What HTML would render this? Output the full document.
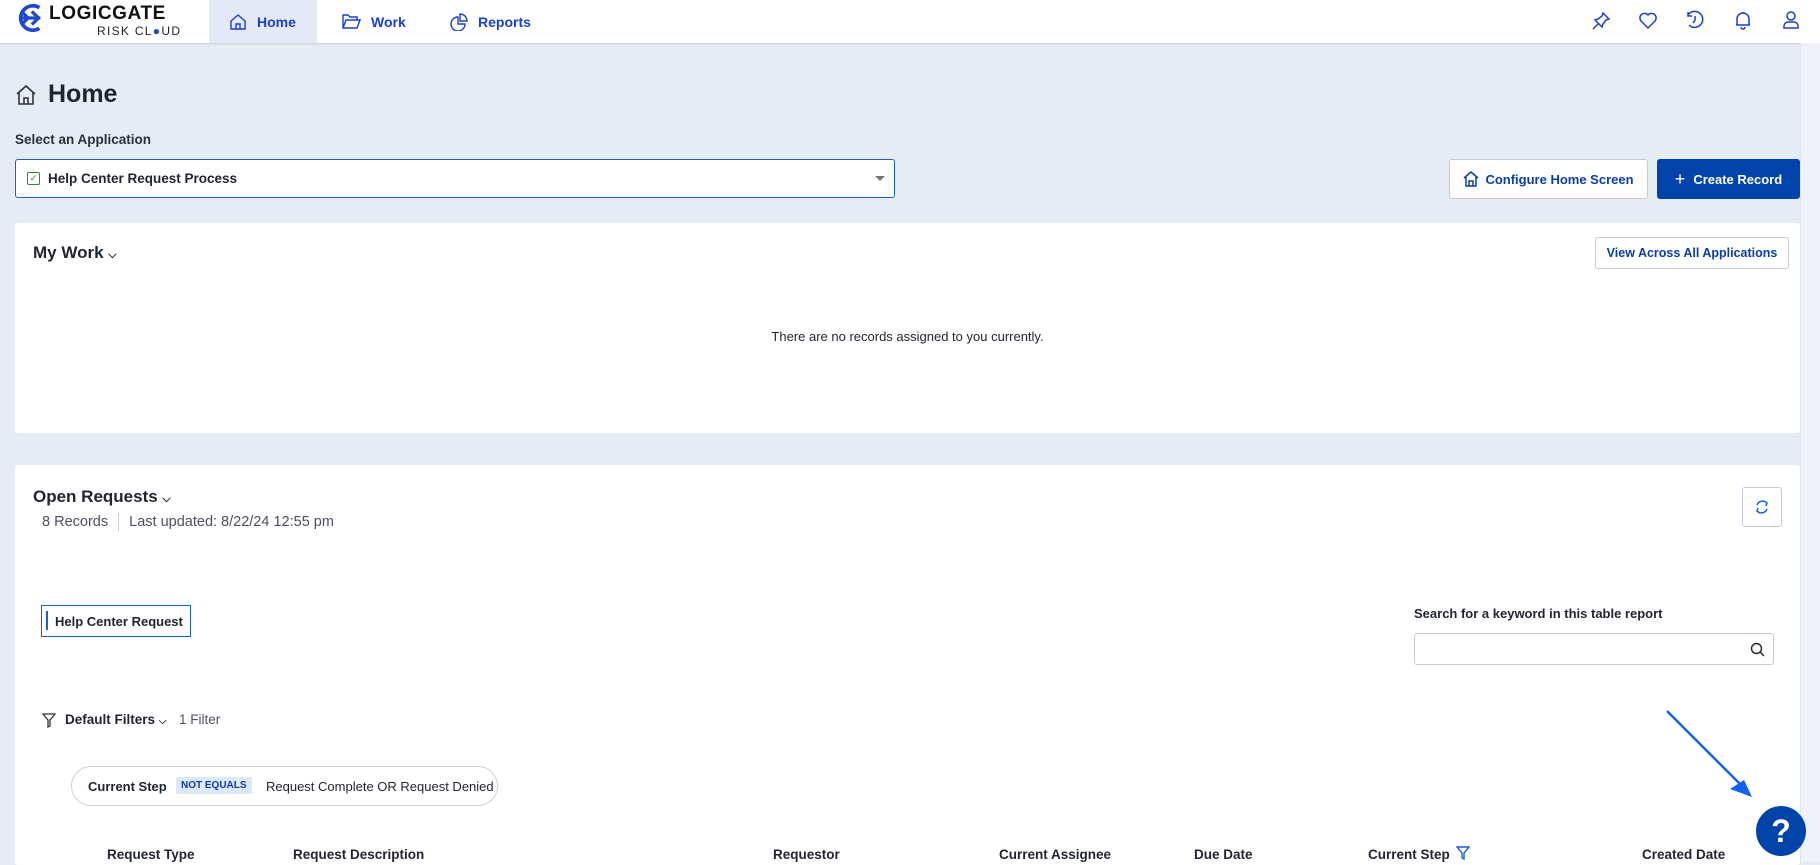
<!DOCTYPE html>
<html><head><meta charset="utf-8"><style>
*{box-sizing:border-box;margin:0;padding:0;white-space:nowrap}
body{width:1820px;height:862px;overflow:hidden;background:#e6ecf4;font-family:"Liberation Sans",sans-serif;color:#1e2430;position:relative}
.nav{position:absolute;left:0;top:0;width:1820px;height:43px;background:#fff;box-shadow:0 1px 2px rgba(0,0,0,.12)}
.abs{position:absolute}
.navitem{position:absolute;top:0;height:43px;display:flex;align-items:center;color:#1a3fcf;font-size:14px;font-weight:bold}
.navitem svg{margin-right:10px}
.btn{position:absolute;border:1px solid #c5cad6;border-radius:3px;background:#fff;color:#0c3da6;font-weight:bold;font-size:13px;display:flex;align-items:center;justify-content:center}
.card{position:absolute;background:#fff;border-radius:3px}
.th{position:absolute;top:847px;font-size:13.5px;font-weight:bold;color:#1e2430}
</style></head><body>
<div class="nav">
 <svg class="abs" style="left:14px;top:3px" width="32" height="30" viewBox="0 0 34 32"><path d="M27 5A13 13 0 1 0 27 27" fill="none" stroke="#1f47c9" stroke-width="4"/><path d="M6 16h22M19 9l7 7-7 7M10 11l5 5-5 5" fill="none" stroke="#1f47c9" stroke-width="3.5"/></svg>
 <div class="abs" style="left:49px;top:3px;font-size:19px;font-weight:bold;letter-spacing:0.6px;color:#111">LOGICGATE</div>
 <div class="abs" style="left:97px;top:24px;font-size:12px;letter-spacing:1.3px;color:#222">RISK CL<span style="color:#1f47c9">●</span>UD</div>
 <div class="abs" style="left:209px;top:0;width:108px;height:43px;background:#e4e9f8"></div>
 <div class="navitem" style="left:229px"><svg width="18" height="18" viewBox="0 0 18 18" fill="none" stroke="#1a3fcf" stroke-width="1.4"><path d="M2 8L9 2l7 6v8H2zM7 16v-5h4v5"/></svg>Home</div>
 <div class="navitem" style="left:342px"><svg width="19" height="17" viewBox="0 0 19 17" fill="none" stroke="#1a3fcf" stroke-width="1.4"><path d="M1 15V2h5l2 2h7v3M1 15l3-8h14l-3 8z"/></svg>Work</div>
 <div class="navitem" style="left:450px"><svg width="18" height="18" viewBox="0 0 18 18" fill="none" stroke="#1a3fcf" stroke-width="1.4"><path d="M8 4a7 7 0 1 0 7 7H8z"/><path d="M10 1v7h7a7 7 0 0 0-7-7z"/></svg>Reports</div>
 <svg class="abs" style="left:1591px;top:11px" width="20" height="20" viewBox="0 0 20 20" fill="none" stroke="#1a3fcf" stroke-width="1.5"><path d="M12 2l6 6-3 1-3 4-1 3-7-7 3-1 4-3zM7 13l-5 5"/></svg>
 <svg class="abs" style="left:1638px;top:11px" width="20" height="20" viewBox="0 0 20 20" fill="none" stroke="#1a3fcf" stroke-width="1.5"><path d="M10 17L3 10a4 4 0 0 1 7-6 4 4 0 0 1 7 6z"/></svg>
 <svg class="abs" style="left:1685px;top:10px" width="20" height="20" viewBox="0 0 20 20" fill="none" stroke="#1a3fcf" stroke-width="1.5"><path d="M3 5a8 8 0 1 1 1 10M3 2v4h4M10 6v4l-2 3"/></svg>
 <svg class="abs" style="left:1733px;top:10px" width="20" height="20" viewBox="0 0 20 20" fill="none" stroke="#1a3fcf" stroke-width="1.5"><path d="M4 15V9a6 6 0 0 1 12 0v6H3h14M8 17a2 2 0 0 0 4 0M10 3V2"/></svg>
 <svg class="abs" style="left:1781px;top:10px" width="20" height="20" viewBox="0 0 20 20" fill="none" stroke="#1a3fcf" stroke-width="1.5"><circle cx="10" cy="6" r="4"/><path d="M3 18v-2a4 4 0 0 1 4-4h6a4 4 0 0 1 4 4v2z"/></svg>
</div>
<div class="abs" style="right:0;top:43px;width:20px;height:819px;background:#eef2f8;border-left:1px solid #dde3ec"></div>

<svg class="abs" style="left:15px;top:84px" width="22" height="22" viewBox="0 0 22 22" fill="none" stroke="#333" stroke-width="1.6"><path d="M2 10L11 2l9 8M4 8v12h14V8M9 20v-6h4v6"/></svg>
<div class="abs" style="left:48px;top:80px;font-size:25px;font-weight:bold">Home</div>
<div class="abs" style="left:15px;top:132px;font-size:13.5px;font-weight:bold;color:#2a2f3a">Select an Application</div>
<div class="abs" style="left:15px;top:159px;width:880px;height:39px;background:#fff;border:1px solid #1b5fd0;border-radius:3px">
 <div class="abs" style="left:11px;top:12px;width:13px;height:13px;border:1.5px solid #2c8a3c;border-radius:2px;font-size:9px;color:#2c8a3c;text-align:center;line-height:10px">✓</div>
 <div class="abs" style="left:32px;top:11px;font-size:13.5px;font-weight:bold">Help Center Request Process</div>
 <div class="abs" style="right:9px;top:16px;border-left:5px solid transparent;border-right:5px solid transparent;border-top:5px solid #777"></div>
</div>
<div class="btn" style="left:1449px;top:159px;width:199px;height:40px;font-size:13px"><svg width="16" height="16" viewBox="0 0 16 16" fill="none" stroke="#0c3da6" stroke-width="1.5" style="margin-right:6px"><path d="M1 7l7-6 7 6M3 5v10h10V5M6 15v-5h4v5"/></svg>Configure Home Screen</div>
<div class="btn" style="left:1657px;top:159px;width:143px;height:40px;background:#0044aa;border-color:#0044aa;color:#fff"><span style="font-size:18px;font-weight:normal;margin-right:8px">+</span>Create Record</div>

<div class="card" style="left:15px;top:223px;width:1785px;height:210px">
 <div class="abs" style="left:18px;top:20px;font-size:17px;font-weight:bold">My Work <span style="font-size:11px">⌵</span></div>
 <div class="btn" style="left:1580px;top:14px;width:194px;height:32px;font-size:12.5px">View Across All Applications</div>
 <div class="abs" style="left:0;width:100%;top:106px;text-align:center;font-size:13px">There are no records assigned to you currently.</div>
</div>

<div class="card" style="left:15px;top:465px;width:1785px;height:400px">
 <div class="abs" style="left:18px;top:22px;font-size:17px;font-weight:bold">Open Requests <span style="font-size:11px">⌵</span></div>
 <div class="abs" style="left:27px;top:48px;font-size:14.5px;color:#4a5160">8 Records <span style="display:inline-block;width:1px;height:18px;background:#ccc;vertical-align:middle;margin:0 6px"></span> Last updated: 8/22/24 12:55 pm</div>
 <div class="btn" style="left:1727px;top:22px;width:40px;height:40px;border-radius:3px"><svg width="18" height="18" viewBox="0 0 18 18" fill="none" stroke="#1a5fd6" stroke-width="1.5"><path d="M14 5a6 6 0 0 0-10 2M4 13a6 6 0 0 0 10-2M11 3l3 2-1 3M7 15l-3-2 1-3"/></svg></div>
 <div class="abs" style="left:26px;top:140px;width:150px;height:32px;border:1.5px solid #1b5fd0">
  <div class="abs" style="left:4px;top:5px;width:1.5px;height:19px;background:#1b5fd0"></div>
  <div class="abs" style="left:13px;top:8px;font-size:13px;font-weight:bold">Help Center Request</div>
 </div>
 <div class="abs" style="left:1399px;top:141px;font-size:13px;font-weight:bold">Search for a keyword in this table report</div>
 <div class="abs" style="left:1399px;top:168px;width:360px;height:32px;border:1px solid #c5cad6;border-radius:3px">
  <svg class="abs" style="right:8px;top:8px" width="15" height="15" viewBox="0 0 15 15" fill="none" stroke="#222" stroke-width="1.4"><circle cx="6.5" cy="6.5" r="5"/><path d="M10 10l4 4"/></svg></div>
 <svg class="abs" style="left:27px;top:248px" width="14" height="15" viewBox="0 0 14 15" fill="none" stroke="#333" stroke-width="1.3"><path d="M1 1h12L8 7v6l-2 1V7z"/></svg>
 <div class="abs" style="left:50px;top:247px;font-size:13.5px;font-weight:bold">Default Filters <span style="font-size:10px">⌵</span></div>
 <div class="abs" style="left:164px;top:247px;font-size:13.5px;color:#4a5160">1 Filter</div>
 <div class="abs" style="left:56px;top:301px;width:427px;height:40px;border:1px solid #ccd1da;border-radius:20px">
  <div class="abs" style="left:16px;top:12px;font-size:13px;font-weight:bold">Current Step</div>
  <div class="abs" style="left:104px;top:10px;padding:3px 5px;background:#dde8fb;color:#0c3da6;font-size:10px;font-weight:bold;border-radius:2px">NOT EQUALS</div>
  <div class="abs" style="left:194px;top:12px;font-size:13px">Request Complete OR Request Denied</div>
 </div>
</div>
<div class="th" style="left:107px">Request Type</div>
<div class="th" style="left:293px">Request Description</div>
<div class="th" style="left:773px">Requestor</div>
<div class="th" style="left:999px">Current Assignee</div>
<div class="th" style="left:1194px">Due Date</div>
<div class="th" style="left:1368px">Current Step</div>
<svg class="abs" style="left:1456px;top:846px" width="14" height="14" viewBox="0 0 14 14" fill="none" stroke="#1a5fd6" stroke-width="1.4"><path d="M1 1h12L8 7v6L6 12V7z"/></svg>
<div class="th" style="left:1642px">Created Date</div>
<svg class="abs" style="left:1660px;top:700px" width="100" height="110" viewBox="0 0 100 110"><path d="M7 11L84 88" stroke="#1560ef" stroke-width="2.5"/><path d="M92 97L70 89 84 80z" fill="#1560ef"/></svg>
<div class="abs" style="left:1756px;top:806px;width:50px;height:50px;border-radius:50%;background:#0044aa;color:#fff;font-size:32px;font-weight:bold;text-align:center;line-height:50px">?</div>
</body></html>
